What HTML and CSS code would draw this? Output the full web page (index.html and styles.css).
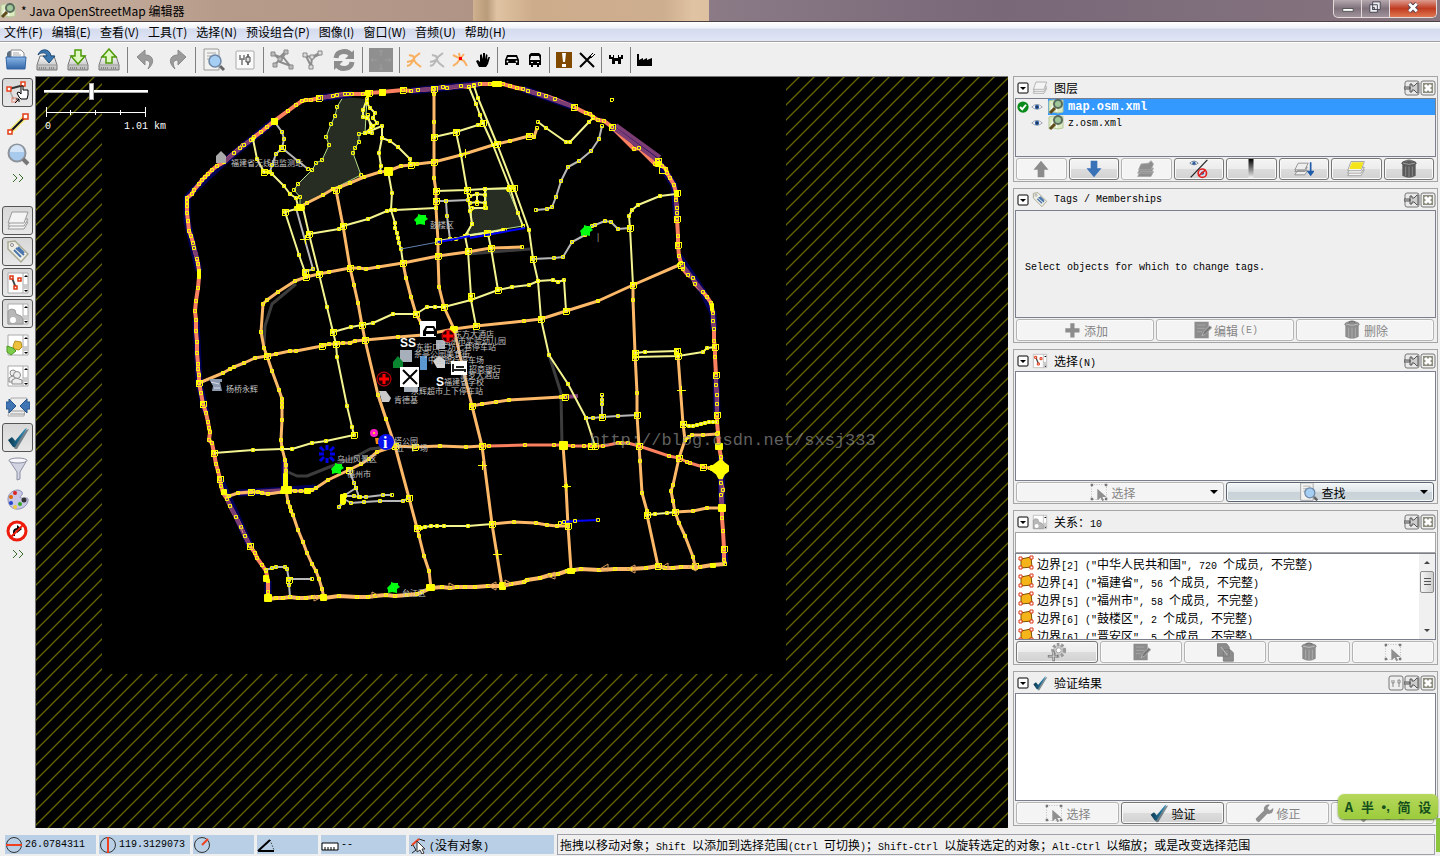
FILE: index.html
```html
<!DOCTYPE html>
<html lang="zh-CN">
<head>
    <meta charset="UTF-8">
    <meta name="viewport" content="width=device-width, initial-scale=1.0">
    <title>* Java OpenStreetMap 编辑器</title>
    <link rel="stylesheet" href="styles.css">
</head>
<body>
    <!-- shared icons -->
    <svg class="sprite" aria-hidden="true">
        <defs>
            <linearGradient id="blue" x2="0" y2="1"><stop offset="0" stop-color="#8ab8e8"/><stop offset="1" stop-color="#3467a8"/></linearGradient>
            <linearGradient id="metal" x2="0" y2="1"><stop offset="0" stop-color="#fafafa"/><stop offset="1" stop-color="#b4b4b4"/></linearGradient>
            <linearGradient id="tick" x2="1" y2="0"><stop offset="0" stop-color="#0c3850"/><stop offset="1" stop-color="#2b91c0"/></linearGradient>
            <linearGradient id="fade" x2="0" y2="1"><stop offset="0" stop-color="#000"/><stop offset="1" stop-color="#fff"/></linearGradient>
        </defs>
        <symbol id="i-josm" viewBox="0 0 16 16"><path d="M1 2l4-1 5 1 5-1v12l-5 1-5-1-4 1z" fill="#dcebc0" stroke="#b5c99a"/><path d="M3 10l4-6 2 9" fill="none" stroke="#fff"/><circle cx="10" cy="5" r="4" fill="#9fc79a" stroke="#5a6a5c" stroke-width="2"/><path d="M7 9l-5 5" stroke="#5f4a20" stroke-width="3"/></symbol>
        <symbol id="i-open" viewBox="0 0 24 24"><path d="M3 20V5l2-2h6l2 3h7v14z" fill="#5d6e80"/><path d="M7 2h10l3 3v10H7z" fill="#fff" stroke="#888"/><path d="M9 5h6M9 7h8" stroke="#aaa"/><path d="M2 9h20l-1 12H3z" fill="url(#blue)" stroke="#3465a4"/></symbol>
        <symbol id="i-disk" viewBox="0 0 24 24"><path d="M5 8h14l3 9v5H2v-5z" fill="url(#metal)" stroke="#777"/><path d="M2 17h20" stroke="#999"/><path d="M4 20h7M14 20h6" stroke="#555" stroke-dasharray="1 1"/></symbol>
        <symbol id="i-save" viewBox="0 0 24 24"><use href="#i-disk"/><path d="M3 7C5 0 15 0 16 8h4l-6 7-6-7h4C11 4 6 4 3 7z" fill="#3c78b0" stroke="#1d4b78"/></symbol>
        <symbol id="i-down" viewBox="0 0 24 24"><use href="#i-disk"/><path d="M9 2h6v6h4l-7 8-7-8h4z" fill="#e0f8c4" stroke="#4e9a06" stroke-width="1.5"/></symbol>
        <symbol id="i-up" viewBox="0 0 24 24"><use href="#i-disk"/><path d="M9 15V9H5l7-8 7 8h-4v6z" fill="#e0f8c4" stroke="#4e9a06" stroke-width="1.5"/></symbol>
        <symbol id="i-undo" viewBox="0 0 24 24"><path d="M3 9l8-7v5c9 0 10 8 3 14 3-6 2-9-3-9v5z" fill="#9b9b9b" stroke="#8a8a8a"/></symbol>
        <symbol id="i-find" viewBox="0 0 24 24"><path d="M2 1h14l1 1v20H2z" fill="#f2f2f0" stroke="#999"/><path d="M5 5h9M5 8h4M5 11h3" stroke="#aaa"/><circle cx="13" cy="13" r="6" fill="#a6cdf2" stroke="#6d86a5" stroke-width="1.5"/><path d="M18 18l4 4" stroke="#666" stroke-width="3"/></symbol>
        <symbol id="i-prefs" viewBox="0 0 24 24"><rect x="3" y="3" width="18" height="18" rx="1" fill="#fafafa" stroke="#aaa"/><path d="M7 7v5M11 7v5M7 11h4M9 11v6" fill="none" stroke="#777" stroke-width="1.500"/><path d="M15 6v4M15 14v3" stroke="#777" stroke-width="2"/><path d="M13 9h4v5h-4z" fill="#ddd" stroke="#444"/></symbol>
        <symbol id="i-ways" viewBox="0 0 24 24"><g fill="none" stroke="#8d8d8d" stroke-width="2"><path d="M2 6l8 3 6-6M16 4l-6 10 11 4M4 17l9-8 8 10M5 7l3 3"/></g><g fill="#bbb" stroke="#888"><path d="M1 4h4v4H1zM14 2h4v4h-4zM3 15h4v4H3zM19 17h4v4h-4zM8 9h4v4H8z"/></g></symbol>
        <symbol id="i-merge" viewBox="0 0 24 24"><path d="M4 8l7 1 7-4M5 8l5 10 1-8 8-4" fill="none" stroke="#8d8d8d" stroke-width="2"/><g fill="#ddd" stroke="#888"><path d="M2 5h4v4H2zM9 7h4v4H9zM17 3h4v4h-4zM8 17h4v4H8z"/></g></symbol>
        <symbol id="i-sync" viewBox="0 0 24 24"><path d="M4 10c1-8 12-8 15-3M20 14c-1 8-12 8-15 3" fill="none" stroke="#8c8c8c" stroke-width="5"/><path d="M22 2v9h-9zM2 22v-9h9z" fill="#8c8c8c"/></symbol>
        <symbol id="i-pan" viewBox="0 0 24 24"><path fill="#8f8f8f" d="M0 0h24v24H0z"/><path d="M12 2v6M12 16v6M2 12h6M16 12h6M10 4l2-2 2 2M10 20l2 2 2-2M4 10l-2 2 2 2M20 10l2 2-2 2" fill="none" stroke="#9c9c9c"/></symbol>
        <symbol id="i-road" viewBox="0 0 16 16"><path d="M3 3l4 1 1 3-3 2-4 1M14 1L9 5 7 9 4 13l-3 1M8 8l2 3 5 4" fill="none" stroke="currentColor" stroke-width="2"/></symbol>
        <symbol id="i-hand" viewBox="0 0 16 16"><path d="M4 15L1 9l2-1 2 2V3l1.500-1L8 7V1h2v6l1-5 1.500 1-.5 5 1.500-3L15 5l-2 7-2 3z"/></symbol>
        <symbol id="i-car" viewBox="0 0 16 16"><path d="M3 3h10l2 5v5h-3v-2H4v2H1V8z"/><path d="M4 5h8l1 2H3z" fill="#efefef"/><circle cx="3.500" cy="9.500" r="1" fill="#efefef"/><circle cx="12.500" cy="9.500" r="1" fill="#efefef"/></symbol>
        <symbol id="i-bus" viewBox="0 0 16 16"><path d="M4 1h8l2 2v10h-2v2h-2v-2H6v2H4v-2H2V3z"/><path d="M4 4h8l1 4H3zM4 10h2v1H4zM10 10h2v1h-2z" fill="#efefef"/></symbol>
        <symbol id="i-warn" viewBox="0 0 16 16"><path fill="#814a00" d="M0 0h16v16H0z"/><path d="M6 1h4l-1 9H7zM6 12h4v3H6z" fill="#fff"/></symbol>
        <symbol id="i-food" viewBox="0 0 16 16"><path d="M1 1l14 14M1 15L12 4" stroke="currentColor" stroke-width="2"/><path d="M10 5l4-4M12 6l4-4M10 4l2 2" stroke="currentColor"/></symbol>
        <symbol id="i-castle" viewBox="0 0 16 16"><path d="M1 3h2v2h2V3h1v3h4V3h1v2h2V3h2v4h-2v5h-3V9H7v3H4V7H1z"/></symbol>
        <symbol id="i-factory" viewBox="0 0 16 16"><path d="M0 14V2h2v6l4-2v2l4-2v2l5-2v8z"/></symbol>
        <symbol id="i-select" viewBox="0 0 24 24"><path d="M3 8l15-4" stroke="#333" stroke-width="2"/><path d="M3 8l5 11" stroke="#aaa" stroke-width="1.500"/><g fill="#fff" stroke="#e8431c" stroke-width="1.500"><path d="M1 6h4v4H1zM15 1h4v4h-4z"/><path opacity=".4" d="M6 17h4v4H6z"/></g><path d="M13 16l-2-4 2-1 2 2V5h2v4h5v5l-1 4h-6z" fill="#fff" stroke="#000"/><path d="M9 22l4-4M13 18h-3M13 18v3" stroke="#000"/></symbol>
        <symbol id="i-draw" viewBox="0 0 24 24"><path d="M4 20L19 5" stroke="#f5ec7a" stroke-width="5"/><path d="M4 20L19 5" stroke="#112" stroke-width="2"/><g fill="#fff" stroke="#e23c14" stroke-width="1.500"><path d="M2 18h4v4H2zM17 2h5v5h-5z"/></g></symbol>
        <symbol id="i-zoom" viewBox="0 0 24 24"><circle cx="11" cy="10" r="8.500" fill="#a8cbed" stroke="#8e949c" stroke-width="2"/><path d="M4 9a7 7 0 0114 0z" fill="#d3e5f6"/><path d="M17 16l5 5" stroke="#777" stroke-width="4"/></symbol>
        <symbol id="i-layers" viewBox="0 0 24 24"><g fill="#f4f4f4" stroke="#999"><path d="M6 13h16l-4 7H2z"/><path d="M6 10h16l-4 7H2z"/><path d="M6 3h16l-4 11H2z"/></g></symbol>
        <symbol id="i-tag" viewBox="0 0 24 24"><path d="M2 2l7-1 13 13-7 8L2 9z" fill="#f0efe6" stroke="#a9aa94" stroke-width="1.500"/><circle cx="6" cy="5" r="1.500" fill="#fff" stroke="#888"/><path d="M8 10l7 7M10 8l8 7M12 7l6 6" stroke="#4a76ae" stroke-width="2"/></symbol>
        <symbol id="i-panel" viewBox="0 0 24 24"><path d="M2 2h20v20H2z" fill="#fff" stroke="#aaa"/><path d="M17 2v20M17 14h5" stroke="#aaa"/><path d="M17 14h5v4h-5z" fill="#ccc"/><path d="M18 6l2-2 2 2zM18 19l2 2 2-2z"/></symbol>
        <symbol id="i-sel" viewBox="0 0 24 24"><use href="#i-panel"/><path d="M6 7l4 10" stroke="#444" stroke-width="2"/><g fill="#fff" stroke="#df3713" stroke-width="1.500"><path d="M4 5h3v3H4zM12 7h3v3h-3zM8 15h3v3H8z"/></g></symbol>
        <symbol id="i-rel" viewBox="0 0 24 24"><use href="#i-panel"/><path d="M2 9l3-2 4 1 1 4 5 2 2 3v5H2z" fill="#b8b8b8" stroke="#999"/><circle cx="7" cy="18" r="3" fill="#fff"/></symbol>
        <symbol id="i-cmd" viewBox="0 0 24 24"><use href="#i-panel"/><path d="M7 13l2-5 6 1 1 5-3 3-5-1z" fill="#ecc13d" stroke="#b99018"/><path d="M1 13l6 2 3 3-5 4-4-3z" fill="#7dcc4c" stroke="#4c9a24"/></symbol>
        <symbol id="i-user" viewBox="0 0 24 24"><use href="#i-panel"/><g fill="#eee" stroke="#888"><circle cx="7" cy="9" r="3"/><path d="M3 18v-4l3-2 5 2v4z"/><circle cx="11" cy="11" r="3.500"/><path d="M6 20v-4l4-2 6 2v4z"/></g></symbol>
        <symbol id="i-conf" viewBox="0 0 24 24"><path d="M5 3h16l-3 18H2z" fill="#eee" stroke="#aaa"/><path d="M3 16h17M4 19h15" stroke="#999"/><path d="M0 7h3V4l7 7-7 7v-4H0zM24 7h-3V4l-7 7 7 7v-4h3z" fill="#3f74b5" stroke="#275488"/></symbol>
        <symbol id="i-check" viewBox="0 0 24 24"><path d="M2 14l4-3 3 4L19 3l3-1-12 20H8z" fill="#0b2433" transform="translate(1 1)" opacity=".5"/><path d="M2 14l4-3 3 4L19 3l2-1L9 21H7z" fill="url(#tick)"/></symbol>
        <symbol id="i-filter" viewBox="0 0 24 24"><path d="M3 3h18l-7 12v7l-3 1v-8z" fill="#d2d4e2" stroke="#8d90a3"/><ellipse cx="12" cy="3.500" rx="9" ry="2.500" fill="#f7f7fb" stroke="#8d90a3"/></symbol>
        <symbol id="i-paint" viewBox="0 0 24 24"><path d="M2 12C1 4 12-1 16 4c2 4-4 4-1 6 4 1 8-2 7 3-2 10-19 12-20-1z" fill="#c8c8e6" stroke="#8f90b2"/><g><circle cx="9" cy="5" r="2" fill="#d22"/><circle cx="5" cy="9" r="2" fill="#d60"/><circle cx="5" cy="15" r="2" fill="#24c"/><circle cx="9" cy="19" r="2" fill="#ec4"/><circle cx="14" cy="16" r="2" fill="#3a2"/><circle cx="18" cy="12" r="2.500" fill="#333"/></g></symbol>
        <symbol id="i-turn" viewBox="0 0 24 24"><circle cx="11" cy="12" r="9" fill="#fff" stroke="#ee1c0c" stroke-width="3"/><path d="M8 17v-4c0-2 2-3 4-3" fill="none" stroke="#000" stroke-width="2"/><path d="M11 6l5 4-5 4z"/><path d="M5 18L17 6" stroke="#ee1c0c" stroke-width="2"/></symbol>
        <symbol id="i-eye" viewBox="0 0 16 16"><path d="M1 8q7-7 14 0-7 6-14 0z" fill="#fff" stroke="#7c8898"/><circle cx="8" cy="8" r="3" fill="#2f5f9f"/><circle cx="8" cy="8" r="1" fill="#000"/></symbol>
        <symbol id="i-ok" viewBox="0 0 16 16"><circle cx="8" cy="8" r="7.500" fill="#0b8a1c"/><path d="M4 8l3 3 5-6" fill="none" stroke="#fff" stroke-width="2.500"/></symbol>
        <symbol id="i-arrow" viewBox="0 0 24 24"><path d="M8 2h8v9h5l-9 11-9-11h5z" fill="currentColor"/></symbol>
        <symbol id="i-dup" viewBox="0 0 24 24"><g fill="#8e8e8e" stroke="#a8a8a8"><path d="M5 15h16l-3 6H2zM5 11h16l-3 6H2z"/><path d="M6 6l9-1 3-3 3 4-3 7H3z"/></g></symbol>
        <symbol id="i-vis" viewBox="0 0 24 24"><path d="M2 22L22 1" stroke="#222" stroke-width="1.500"/><path d="M1 5q5-5 10 0-5 4-10 0z" fill="#fff" stroke="#678"/><circle cx="6" cy="5" r="2" fill="#2f5f9f"/><circle cx="16" cy="17" r="5" fill="#d8dce8" stroke="#e02020" stroke-width="2"/><circle cx="16" cy="17" r="2" fill="#2f5f9f"/><path d="M12 20l8-7" stroke="#e02020" stroke-width="2"/></symbol>
        <symbol id="i-opac" viewBox="0 0 24 24"><path d="M9 0h6v24H9z" fill="url(#fade)"/></symbol>
        <symbol id="i-mergedn" viewBox="0 0 24 24"><g fill="#eee" stroke="#888"><path d="M4 14h12l-3 5H1zM4 10h12l-3 5H1z"/><path d="M5 5h12l-4 8H1z"/></g><path d="M20 4v12M17 15l3 4 3-4z" stroke="#1f5ba8" stroke-width="2" fill="#1f5ba8"/></symbol>
        <symbol id="i-active" viewBox="0 0 24 24"><use href="#i-layers"/><path d="M7 4h14l-3 8H4z" fill="#f4e41c"/></symbol>
        <symbol id="i-trash" viewBox="0 0 24 24"><path d="M4 6h16v14q-8 5-16 0z" fill="currentColor"/><path d="M8 9v12M12 9v13M16 9v12" stroke="#fff" stroke-opacity=".35"/><ellipse cx="12" cy="5" rx="9" ry="3.500" fill="currentColor"/><path d="M5 5q7 3 14 0" fill="none" stroke="#fff" stroke-opacity=".5"/><path d="M8 3q4-3 8 0" fill="none" stroke="#777" stroke-width="2"/></symbol>
        <symbol id="i-pin" viewBox="0 0 16 16"><rect x="1" y="1" width="14" height="14" rx="2" fill="#e9e9e9" stroke="#777"/><path d="M0 7h6v2H0zM6 4h2v2h2l3-3h1v10h-1l-3-3H8v2H6z" fill="#ccc" stroke="#555"/></symbol>
        <symbol id="i-close" viewBox="0 0 16 16"><rect x="1" y="1" width="14" height="14" rx="2" fill="#eee" stroke="#777"/><path d="M3 3h10v10H3z" fill="#8d8d80"/><path d="M5 5l6 6M11 5l-6 6" stroke="#fff" stroke-width="3"/></symbol>
        <symbol id="i-gear" viewBox="0 0 16 16"><rect x="1" y="1" width="14" height="14" rx="2" fill="#eee" stroke="#777"/><path d="M4 5v3h2V5M5 8v4M10 5h2v3h-2zM11 8v4" fill="none" stroke="#888"/></symbol>
        <symbol id="i-fold" viewBox="0 0 12 12"><rect x="1" y="1" width="10" height="10" rx="1" fill="#fff" stroke="#000"/><path d="M3 5h6L6 8z"/></symbol>
        <symbol id="i-plus" viewBox="0 0 24 24"><path d="M10 4h5v6h6v5h-6v6h-5v-6H4v-5h6z" fill="#8c8c8c"/></symbol>
        <symbol id="i-edit" viewBox="0 0 24 24"><path d="M3 2h17v20H3z" fill="#8c8c8c"/><path d="M6 6h10M6 10h10M6 14h6" stroke="#aaa"/><path d="M12 19l2-5 7-7 3 2-8 8z" fill="#777" stroke="#bbb"/></symbol>
        <symbol id="i-pick" viewBox="0 0 24 24"><path d="M3 3h18v18H3z" fill="none" stroke="#aaa" stroke-dasharray="1 2"/><path d="M2 2h3v3H2zM19 2h3v3h-3zM2 19h3v3H2zM19 19h3v3h-3z" fill="#777"/><path d="M10 8v14l4-3 2 4 2-1-2-4h5z" fill="#8f8f8f"/></symbol>
        <symbol id="i-copy" viewBox="0 0 24 24"><path d="M3 2h11l3 4v11H3zM10 9h8l4 4v10H10z" fill="#8c8c8c" stroke="#777"/><path d="M7 6l8 10" stroke="#ccc"/></symbol>
        <symbol id="i-newrel" viewBox="0 0 24 24"><circle cx="14" cy="10" r="7" fill="#ccc" stroke="#999" stroke-width="4" stroke-dasharray="3 2"/><circle cx="14" cy="10" r="3" fill="#fff" stroke="#999"/><path d="M1 17h12M8 11v12" stroke="#777" stroke-width="3"/><path d="M2 17h10M8 12v10" stroke="#ddd"/></symbol>
        <symbol id="i-fix" viewBox="0 0 24 24"><path d="M2 19l10-10c-1-5 3-8 7-7l-3 4 3 3 4-3c1 5-3 8-7 7L6 23q-3 0-4-4z" fill="#909090"/></symbol>
        <symbol id="i-area" viewBox="0 0 16 16"><path d="M3 4l10-2 1 10-11 1z" fill="#f4b41a" stroke="#7c5200"/><g fill="#fff" stroke="#dd3414"><path d="M1 2h3v3H1zM12 1h3v3h-3zM1 11h3v3H1zM12 11h3v3h-3z"/></g></symbol>
    </svg>

    <header class="titlebar">
        <svg class="ic16"><use href="#i-josm"/></svg>
        <h1>* Java OpenStreetMap 编辑器</h1>
        <div class="ghost-tab"></div>
        <div class="win-buttons">
            <button aria-label="最小化"><svg viewBox="0 0 28 18"><rect x="9" y="9" width="11" height="3" fill="#fff" stroke="#555"/></svg></button>
            <button aria-label="还原"><svg viewBox="0 0 28 18"><path d="M11 2h8v8h-8zM8 5h8v8H8zM11 8h2v2h-2z" fill="#eee" stroke="#445"/></svg></button>
            <button class="win-close" aria-label="关闭"><svg viewBox="0 0 48 18"><path d="M20 4l8 8M28 4l-8 8" stroke="#545" stroke-width="5"/><path d="M20 4l8 8M28 4l-8 8" stroke="#fff" stroke-width="3"/></svg></button>
        </div>
    </header>

    <nav class="menubar">
        <button>文件(F)</button><button>编辑(E)</button><button>查看(V)</button><button>工具(T)</button><button>选择(N)</button><button>预设组合(P)</button><button>图像(I)</button><button>窗口(W)</button><button>音频(U)</button><button>帮助(H)</button>
    </nav>

    <div class="toolbar">
        <button aria-label="打开"><svg><use href="#i-open"/></svg></button>
        <button aria-label="保存"><svg><use href="#i-save"/></svg></button>
        <button aria-label="下载"><svg><use href="#i-down"/></svg></button>
        <button aria-label="上传"><svg><use href="#i-up"/></svg></button>
        <i></i>
        <button aria-label="撤销"><svg><use href="#i-undo"/></svg></button>
        <button aria-label="重做"><svg class="flip"><use href="#i-undo"/></svg></button>
        <i></i>
        <button aria-label="搜索"><svg><use href="#i-find"/></svg></button>
        <button aria-label="首选项"><svg><use href="#i-prefs"/></svg></button>
        <i></i>
        <button aria-label="分割路径"><svg><use href="#i-ways"/></svg></button>
        <button aria-label="合并路径"><svg><use href="#i-merge"/></svg></button>
        <button aria-label="更新数据"><svg><use href="#i-sync"/></svg></button>
        <i></i>
        <button aria-label="移动"><svg><use href="#i-pan"/></svg></button>
        <i></i>
        <button class="small orange" aria-label="道路"><svg><use href="#i-road"/></svg></button>
        <button class="small silver" aria-label="小路"><svg><use href="#i-road"/></svg></button>
        <button class="small orange" aria-label="路口"><svg viewBox="0 0 16 16"><path d="M1 14l4-3 3-4 4 2 3 5M8 7L5 5 1 3M8 7l-1-6M8 7l4-5" fill="none" stroke="currentColor" stroke-width="2"/><path d="M7 5h3v3H7z" fill="#f00"/></svg></button>
        <button class="small" aria-label="手"><svg><use href="#i-hand"/></svg></button>
        <i></i>
        <button class="small" aria-label="汽车"><svg><use href="#i-car"/></svg></button>
        <button class="small" aria-label="公交"><svg><use href="#i-bus"/></svg></button>
        <i></i>
        <button class="small" aria-label="警告"><svg><use href="#i-warn"/></svg></button>
        <button class="small" aria-label="餐饮"><svg><use href="#i-food"/></svg></button>
        <i></i>
        <button class="small" aria-label="城堡"><svg><use href="#i-castle"/></svg></button>
        <i></i>
        <button class="small" aria-label="工厂"><svg><use href="#i-factory"/></svg></button>
    </div>

    <main>
        <div class="tools">
            <button class="on" aria-label="选择"><svg><use href="#i-select"/></svg></button>
            <button aria-label="绘制"><svg><use href="#i-draw"/></svg></button>
            <button aria-label="缩放"><svg><use href="#i-zoom"/></svg></button>
            <button class="more" aria-label="更多工具"><svg viewBox="0 0 12 9"><path d="M1 0l4 4-4 4M7 0l4 4-4 4" fill="none" stroke="#3a6a2a"/></svg></button>
            <button class="on split" aria-label="图层"><svg><use href="#i-layers"/></svg></button>
            <button class="on" aria-label="标签"><svg><use href="#i-tag"/></svg></button>
            <button class="on" aria-label="选择列表"><svg><use href="#i-sel"/></svg></button>
            <button class="on" aria-label="关系"><svg><use href="#i-rel"/></svg></button>
            <button aria-label="命令栈"><svg><use href="#i-cmd"/></svg></button>
            <button aria-label="作者"><svg><use href="#i-user"/></svg></button>
            <button aria-label="冲突"><svg><use href="#i-conf"/></svg></button>
            <button class="on" aria-label="验证"><svg><use href="#i-check"/></svg></button>
            <button aria-label="过滤"><svg><use href="#i-filter"/></svg></button>
            <button aria-label="样式"><svg><use href="#i-paint"/></svg></button>
            <button aria-label="转弯限制"><svg><use href="#i-turn"/></svg></button>
            <button class="more" aria-label="更多面板"><svg viewBox="0 0 12 9"><path d="M1 0l4 4-4 4M7 0l4 4-4 4" fill="none" stroke="#3a6a2a"/></svg></button>
        </div>

        <section class="map">
            <svg class="canvas" viewBox="36 77 972 751" preserveAspectRatio="xMinYMin slice">
                <defs>
                    <pattern id="hatch" width="15" height="15" patternUnits="userSpaceOnUse" patternTransform="translate(6 0)">
                        <path d="M-1 16L16 -1M-1 1L1 -1M14 16L16 14" stroke="#666600" stroke-width="1.300"/>
                    </pattern>
                    <marker id="n" markerWidth="5" markerHeight="5" refX="2" refY="2" markerUnits="userSpaceOnUse">
                        <path d="M.5 .5h3v3h-3z" fill="none" stroke="#ff0"/>
                    </marker>
                    <path id="ring-west" d="M469 87L461 86 447 88 443 87 433 89 418 90 411 91 403 90 382 92 369 93 363 94 352 94 348 94 345 94 337 95 333 96 319 98 311 100 306 100 302 101 296 105 288 111 274 121 267 127 261 132 254 137 251 140 244 145 240 148 234 153 224 162 217 166 212 170 208 174 205 177 202 180 199 184 194 190 192 194 187 198 187 202 187 206 187 213 188 221 189 231 191 236 193 243 194 248 197 259 198 264 199 271 199 277 198 288 196 301 195 311 196 320 196 331 197 342 197 353 198 364 198 369 199 375 199 383 201 393 203 404 206 413 208 422 209 428 210 432 209 440 212 443 214 453 216 464 218 471 220 479 221 486 223 493 227 499 230 506 236 517 241 527 245 536 250 546 255 553 257 558 262 565 266 571 268 581 268 592 268 599"/>
                    <path id="ring-east" d="M725 564L724 560 724 549 723 531 722 518 722 508 721 495 723 490 721 483 721 470 721 457 719 447 718 433 717 422 717 415 717 404 717 395 716 385 716 375 715 357 715 347 714 341 714 329 713 321 713 313 712 308 711 303 707 297 703 292 695 284 693 278 688 275 683 269 681 263 679 256 678 245 678 236 677 219 677 213 677 208 676 200 676 193 674 185 670 178 667 173 666 169 662 166 658 161 655 164 639 148 634 149 612 127 604 121 598 120 593 117 590 114 586 113 574 107 555 99 546 96 539 94 528 91 523 89 517 88 510 86 503 84 496 84 490 84 480 84 474 85 469 87"/>
                </defs>
                <path fill="#000" d="M36 77h972v751H36z"/>
                <path fill="url(#hatch)" d="M36 77h66v597h684V77h222v751H36z"/>

                <!-- parks -->
                <g class="park">
                    <path d="M343 97L337 107 335 116 331 124 326 137 329 145 322 160 316 163 312 170 298 184 294 190 300 197 300 206 333 189 361 175 353 153 355 148 359 142 359 134 365 133 367 99"/>
                    <path d="M486 189L508 189 523 226 467 235 472 224 471 209 486 208z"/>
                </g>
                <!-- tunnels -->
                <g class="tunnel">
                    <path d="M296 284L272 304 265 326 264 345M288 472L297 476 307 476 327 468 353 458 370 449 395 446M549 355L561 393 562 445M468 254L530 249M378 395L386 419M472 406L482 446"/>
                </g>
                <!-- ring road -->
                <g class="casing">
                    <path d="M319 98L352 94M411 91L480 84M523 89L574 107M612 127L658 161 674 185 677 219M679 256L703 292 713 313 714 330M716 375L717 415M721 457L722 508M724 549L725 564M274 121L224 162 194 190 187 198 187 221 199 271M196 320L199 383 206 413M220 479L250 546M268 581V599M238 493L286 490 316 488M285 460V490"/>
                </g>
                <use class="ring" href="#ring-west"/>
                <use class="ring" href="#ring-east"/>
                <g class="dusk">
                    <path d="M319 98L352 94M411 91L480 84M523 89L574 107M612 127L658 161M616 125L660 157M676 200L677 219M681 263L703 292M713 313L714 330M716 375L717 415M721 475L722 508M254 137L224 162M193 243L197 259M227 499L250 546M238 493L286 490M285 460V490M565 397L578 396"/>
                </g>
                <use class="ring-nodes" href="#ring-west"/>
                <use class="ring-nodes" href="#ring-east"/>
                <!-- primary roads -->
                <g class="primary">
                    <path d="M434 89V94L434 122 434 137 434 162 434 178 436 191 436 201 436 208 438 241 438 256 439 287 444 307 454 329 464 373 472 406 482 446 492 524 502 586"/>
                    <path d="M336 190L343 226 350 268 354 285 358 303 362 325 365 340 378 395 386 419 395 446 409 498 417 528 419 536 424 556 429 571 431 588"/>
                    <path d="M299 208L307 203 323 195 333 189 340 187 350 183 364 177 380 172 388 171 401 166 411 165 417 164 434 162 461 155 493 145 497 144 510 141 529 136 534 137 537 128"/>
                    <path d="M261 332L263 304 267 300 278 292 295 281 306 277 319 274 329 272 350 268 359 268 366 269 378 267 403 263 438 256 467 252 491 248 522 247"/>
                    <path d="M199 383L223 373 230 369 234 367 244 363 255 358 267 356 276 354 290 351 296 351 322 346 329 344 336 344 343 343 350 343 355 341 365 340 398 337 423 335 454 329 476 326 524 321 541 319 566 311 598 301 633 285 679 265"/>
                    <path d="M261 332L264 348 267 356 272 371 279 390 282 399 282 403 282 407 282 420 281 440 282 448 285 460 286 465 286 471 286 477 286 484 286 490 288 502 290 507 291 511 293 515 298 530 303 542 307 553 312 564 316 571 319 579 322 589 324 598"/>
                    <path d="M223 493L229 496 238 493 251 492 258 492 262 493 268 494 282 492 289 490 295 491 301 491 308 491 312 490 316 488 328 480 349 470 361 464 369 459 377 452 395 446 415 447 440 446 466 447 482 446"/>
                    <path d="M563 445L566 486 568 526 571 570"/>
                    <path d="M633 285L633 300 635 353 637 393 637 415 639 446 640 461 642 493 647 511 647 515 658 566"/>
                    <path d="M677 351L678 356 683 424 685 440 679 458 673 485 671 491 673 501 675 512 679 523 685 536 693 557 695 566"/>
                    <path d="M675 512L693 511 707 508 722 508"/>
                    <path d="M472 406L482 404 496 402 509 400 561 397 565 397"/>
                    <path d="M492 524L514 522 536 523 547 525 557 526 568 526"/>
                    <path d="M403 263L406 278 411 297 416 314 421 323 430 335"/>
                    <path d="M685 440L689 437 692 435 703 435 717 434"/>
                    <path class="wide" d="M268 599L276 598 283 598 290 597 298 598 306 598 313 597 320 597 324 598 339 596 357 597 368 597 375 596 386 595 395 596 407 595 417 594 422 592 431 588 442 587 450 588 457 587 465 587 475 587 488 586 502 586 511 584 524 582 527 580 540 578 550 575 558 574 567 571 574 570 581 569 599 570 615 569 630 569 646 568 658 566 665 568 673 568 681 567 692 567 700 567 712 565 725 564"/>
                </g>
                <g class="trunk">
                    <path d="M482 446L489 446 525 445 554 445 563 445 573 446 584 446 591 446 603 446 618 443 622 443 628 443 639 446 669 456 679 458 687 462 690 463 703 467 710 468 721 469"/>
                </g>
                <!-- secondary roads -->
                <g class="secondary">
                    <path d="M388 171L392 193 391 210 395 223 395 228 397 233 398 238 399 243 401 249 403 263"/>
                    <path d="M417 528L421 528 425 527 431 526 437 526 444 526 468 526 492 524"/>
                    <path d="M635 357L678 356 703 352 707 348 715 347M635 353L645 352 677 351M647 515L655 514 667 513 675 512M683 424L689 426 693 426 697 425 701 424 705 423 709 422 713 422 717 422"/>
                    <path d="M469 87L476 104 480 115 483 123 493 145 510 188 518 213 523 226"/>
                    <path d="M474 86L478 98 497 144 514 188 529 230 533 259 538 281 541 319 549 355 568 384 586 418 595 446"/>
                    <path d="M434 137L456 132 478 125 483 123M456 132L461 155 467 190 470 211 472 224 465 236 468 251 471 296 471 300 476 326"/>
                    <path d="M436 191L467 190 485 189 510 188M438 241L450 239 456 239 465 236 487 233 503 230 505 230M488 234L491 248 498 290"/>
                    <path d="M444 307L471 300 498 290 512 287 529 285 538 281 553 280 558 282 564 280 566 311"/>
                    <path d="M333 332L351 327 362 325 373 323 393 314 416 314 427 307 435 307 444 307"/>
                    <path d="M303 208L309 234 319 274 327 307 333 332 336 344 337 357 347 406 352 427 354 435 326 441 312 443 292 449 282 449 253 450 214 453"/>
                    <path d="M300 206L296 209 285 212 299 255 305 272 306 277M309 234L339 229 343 226 368 219 387 211 395 210 436 208"/>
                    <path d="M253 139L257 159 264 172 268 172 272 174 284 186 290 194 296 198 298 206"/>
                    <path d="M368 94L367 103 370 108 375 113 373 118 377 123 371 128 365 133 382 126 382 138 379 153 381 166 380 172M382 138L390 141 398 147 410 159 411 165M367 99L363 110 363 117 367 118 373 126 369 132 372 133 368 115"/>
                    <path d="M538 122L546 128 566 142 570 142 589 122 593 118M676 194L660 196 638 205 632 210 629 216 630 228 633 285"/>
                    <path d="M470 196L477 194 485 195M470 203L477 202 485 203M477 194V204M485 189V207M472 208H485"/>
                </g>
                <!-- minor roads -->
                <g class="minor">
                    <path d="M436 201L446 201 468 200M446 201L447 216 450 239M296 208L313 269 305 272M274 121L282 132 284 139 282 148 276 154 272 165 270 172M282 148L298 161 308 169"/>
                    <path d="M602 126L599 139 591 151 579 161 568 167 561 181 556 197 552 207 547 209 536 210M533 259L554 258 563 257 572 242 585 235 592 226 595 225 605 221 611 222 618 229 630 228"/>
                    <path d="M266 570L272 568 276 567 285 567 287 569 289 580 289 585 290 597M289 579L312 579M349 470L354 483 356 488 345 495 343 503 339 507 344 499 351 503 364 502 380 501 403 501 409 498M345 496L354 496 360 497 366 497 383 495 392 495M356 488L359 497"/>
                    <path d="M602 395V400L602 404 602 417M586 418L593 418 602 417 618 416 637 415"/>
                </g>
                <g class="water">
                    <path class="thin" d="M401 249L438 242"/>
                    <path d="M438 242L450 240 470 236M470 238L525 228"/>
                    <path class="nodes" d="M560 523L564 522 575 521 598 520"/>
                </g>
                <!-- junctions -->
                <g class="junction">
                    <path d="M431 86h6v6h-6zM431 134h6v6h-6zM431 159h6v6h-6zM433 188h6v6h-6zM433 198h6v6h-6zM435 238h6v6h-6zM435 253h6v6h-6zM347 265h6v6h-6zM340 223h6v6h-6zM333 187h6v6h-6zM306 231h6v6h-6zM282 209h6v6h-6zM303 274h6v6h-6zM316 271h6v6h-6zM302 269h6v6h-6zM330 329h6v6h-6zM362 337h6v6h-6zM359 322h6v6h-6zM413 311h6v6h-6zM441 304h6v6h-6zM400 260h6v6h-6zM408 162h6v6h-6zM271 118h6v6h-6zM316 95h6v6h-6zM379 89h6v6h-6zM400 87h6v6h-6zM366 90h6v6h-6zM279 145h6v6h-6zM261 169h6v6h-6zM453 129h6v6h-6zM464 187h6v6h-6zM494 141h6v6h-6zM511 185h6v6h-6zM507 185h6v6h-6zM480 120h6v6h-6zM526 133h6v6h-6zM571 104h6v6h-6zM609 124h6v6h-6zM655 158h6v6h-6zM659 167h6v6h-6zM674 190h6v6h-6zM674 216h6v6h-6zM675 242h6v6h-6zM678 262h6v6h-6zM630 282h6v6h-6zM627 225h6v6h-6zM563 308h6v6h-6zM538 316h6v6h-6zM530 256h6v6h-6zM495 287h6v6h-6zM488 245h6v6h-6zM465 248h6v6h-6zM468 293h6v6h-6zM473 323h6v6h-6zM484 230h6v6h-6z"/>
                    <path d="M264 353h6v6h-6zM319 343h6v6h-6zM333 341h6v6h-6zM196 380h6v6h-6zM200 401h6v6h-6zM211 450h6v6h-6zM217 476h6v6h-6zM247 543h6v6h-6zM248 489h6v6h-6zM346 467h6v6h-6zM351 432h6v6h-6zM406 495h6v6h-6zM414 525h6v6h-6zM392 443h6v6h-6zM412 444h6v6h-6zM469 403h6v6h-6zM479 443h6v6h-6zM489 521h6v6h-6zM565 523h6v6h-6zM562 394h6v6h-6zM599 414h6v6h-6zM634 412h6v6h-6zM632 350h6v6h-6zM632 354h6v6h-6zM674 348h6v6h-6zM675 353h6v6h-6zM712 344h6v6h-6zM713 372h6v6h-6zM714 412h6v6h-6zM680 421h6v6h-6zM676 455h6v6h-6zM644 512h6v6h-6zM672 509h6v6h-6zM700 464h6v6h-6zM636 443h6v6h-6zM588 443h6v6h-6zM592 443h6v6h-6zM655 563h6v6h-6zM692 563h6v6h-6zM721 546h6v6h-6zM286 577h6v6h-6zM610 98h3v3h-3z"/>
                    <path d="M300 239h9M305 235v9M461 153h9M465 149v9M478 465h9M482 461v9M493 554h9M497 550v9M562 486h9M566 482v9M677 390h9M681 386v9"/>
                </g>
                <g class="cluster">
                    <path d="M385 168h7v7h-7zM272 119h5v5h-5zM380 90h5v5h-5zM366 91h4v4h-4zM493 82h8v4h-8zM560 442h7v7h-7zM282 487h9v6h-9zM305 489h5v4h-5zM284 474h3v12h-3zM719 505h6v6h-6zM716 444h6v5h-6zM711 466h3v4h-3zM265 595h6v6h-6zM264 576h4v5h-4zM427 585h7v5h-7zM500 583h5v6h-5zM568 569h6v4h-6zM321 595h5v5h-5zM341 495h4v8h-4zM297 205h6v5h-6zM451 327h6v5h-6zM198 270h2v7h-2zM711 304h2v6h-2zM656 162h4v4h-4zM676 191h2v5h-2zM222 490h4v4h-4zM711 564h4v3h-4z"/>
                    <path d="M721 460l3 3 4 3v5l-4 3-2 4h-3l-2-4-4-3v-5l4-3z"/>
                </g>
                <g class="oneway">
                    <path d="M320 598l-6-3v6zM378 595l-6-3v6zM455 586l-6-3v6zM488 586l8-4v8zM511 583l-6-3v6zM547 576l8-4v7zM600 569l8-5v7zM627 569l8-4v8zM662 567l6-4v6zM688 567l8-4v8zM208 420l-3-7M243 533l-3-8M239 148l3-5"/>
                </g>

                <!-- places -->
                <path class="town" d="M414 220l4-4v-2l3 1h5v2l2 2-3 2v4l-5-1-4 1v-3zM580 231l4-4v-2l3 1h4v2l2 2-3 2v4l-5-1-4 1v-3zM331 469l4-4v-2l3 1h4v2l2 2-3 2v4l-5-1-4 1v-3zM387 588l4-4v-2l3 1h4v2l2 2-3 2v4l-5-1-4 1v-3z"/>
                <path d="M216 163v-7l5-5 5 5v7z" fill="#aaa"/>
                <path d="M209 379h13v3h-2l2 9h-10l1-5z" fill="#8d9ab0"/><path d="M211 382l8 2M214 388h6" stroke="#dde"/><path d="M379 391h7l5 7-2 4h-7z" fill="#c9c9c9"/>
                <path d="M320 447l4 4M327 445v5M334 447l-4 4M319 454h5M330 454h5M320 461l4-4M327 458v5M334 461l-4-4" stroke="#0000e8" stroke-width="3" fill="none"/>
                <circle cx="374" cy="433" r="4" fill="#ff1cc8"/><circle cx="374" cy="433" r="1" fill="#ff0"/>
                <path d="M375 438h6l-1 6h-4z" fill="#f58a12"/>
                <path d="M400 350h12v12h-12zM404 382h14v10h-14zM436 340h9v9h-9z" fill="#a6afba"/><path d="M420 356h7v14h-7z" fill="#5b96d0"/><path d="M393 362l5-6 5 6v6h-10z" fill="#0a8630"/><path d="M433 361l6-5 6 4v8h-8z" fill="#d6d6d6"/>
                <g class="label">
                    <text x="231" y="166">福建省无线电监测站</text><text x="430" y="228">鼓楼区</text><text x="226" y="392">杨桥永辉</text><text x="394" y="403">肯德基</text><text x="394" y="444">塔公园</text><text x="396" y="451">五一广场</text><text x="337" y="462">乌山风景区</text><text x="347" y="477">福州市</text><text x="402" y="596">台江区</text><text x="597" y="240">|</text>
                    <text x="454" y="337">东方大酒店</text><text x="442" y="344">福州市实验幼儿园</text><text x="416" y="350">东街口三坊七巷停车站</text><text x="414" y="357">茶亭公园美食街</text><text x="428" y="363">中国银行停车场</text><text x="469" y="372">招商银行</text><text x="460" y="378">聚罗大酒店</text><text x="444" y="385">福建省学校</text><text x="411" y="394">永辉超市上下停车站</text>
                </g>
                <circle cx="448" cy="336" r="6" class="med"/><path d="M448 331v10M443 336h10" class="cross"/>
                <circle cx="384" cy="379" r="7" class="med"/><path d="M384 374v10M379 379h10" class="cross"/>
                <text class="dollar" x="400" y="347">SS</text><text class="dollar" x="436" y="386">S</text>
                <path d="M420 321h16v16h-16zM400 367h19v20h-19zM451 361h16v14h-16z" fill="#fff"/>
                <path d="M423 336v-5l3-5h8l3 5v5h-3v-2h-8v2z"/><path d="M427 328h6l1 3h-8z" fill="#fff"/>
                <path d="M403 370l14 14M403 384l14-14" stroke="#000" stroke-width="2"/>
                <path d="M453 364v8M453 370h12v2M456 367h8" stroke="#222" stroke-width="2" fill="none"/>
                <circle cx="386" cy="442" r="8" fill="#0a12f0"/><text class="info" x="383" y="448">i</text>
                <text class="mark" x="590" y="445">http://blog.csdn.net/sxsj333</text>
            </svg>
            <div class="scale">
                <input type="range" min="0" max="100" value="45" aria-label="缩放">
                <svg viewBox="0 0 104 12"><path d="M2.500 1v10M101.500 1v10M2 6.500h100M26.500 4v5M51.500 4v5M76.500 4v5" stroke="#fff" fill="none"/></svg>
                <div class="scale-text"><span>0</span><span>1.01 km</span></div>
            </div>
        </section>

        <aside>
            <section class="panel">
                <h2><svg class="fold"><use href="#i-fold"/></svg><svg class="ic16"><use href="#i-layers"/></svg><span class="zh">图层</span>
                    <button aria-label="固定"><svg><use href="#i-pin"/></svg></button><button aria-label="关闭"><svg><use href="#i-close"/></svg></button></h2>
                <ul class="box layers">
                    <li class="current"><svg class="fold"><use href="#i-ok"/></svg><svg class="eye"><use href="#i-eye"/></svg><span><svg class="ic16"><use href="#i-josm"/></svg>map.osm.xml</span></li>
                    <li><svg class="fold"></svg><svg class="eye"><use href="#i-eye"/></svg><span><svg class="ic16"><use href="#i-josm"/></svg>z.osm.xml</span></li>
                </ul>
                <div class="actions">
                    <button disabled aria-label="上移"><svg class="upside"><use href="#i-arrow"/></svg></button>
                    <button class="bluebtn" aria-label="下移"><svg><use href="#i-arrow"/></svg></button>
                    <button disabled aria-label="复制"><svg><use href="#i-dup"/></svg></button>
                    <button aria-label="显示"><svg><use href="#i-vis"/></svg></button>
                    <button aria-label="不透明度"><svg><use href="#i-opac"/></svg></button>
                    <button aria-label="合并"><svg><use href="#i-mergedn"/></svg></button>
                    <button aria-label="激活"><svg><use href="#i-active"/></svg></button>
                    <button aria-label="删除图层"><svg><use href="#i-trash"/></svg></button>
                </div>
            </section>

            <section class="panel">
                <h2><svg class="fold"><use href="#i-fold"/></svg><svg class="ic16"><use href="#i-tag"/></svg><span>Tags / Memberships</span>
                    <button aria-label="固定"><svg><use href="#i-pin"/></svg></button><button aria-label="关闭"><svg><use href="#i-close"/></svg></button></h2>
                <div class="box hint">Select objects for which to change tags.</div>
                <div class="actions">
                    <button disabled><svg><use href="#i-plus"/></svg><span class="zh">添加</span></button>
                    <button disabled><svg><use href="#i-edit"/></svg><span class="zh">编辑</span>(E)</button>
                    <button disabled><svg><use href="#i-trash"/></svg><span class="zh">删除</span></button>
                </div>
            </section>

            <section class="panel">
                <h2><svg class="fold"><use href="#i-fold"/></svg><svg class="ic16"><use href="#i-sel"/></svg><span><span class="zh">选择</span>(N)</span>
                    <button aria-label="固定"><svg><use href="#i-pin"/></svg></button><button aria-label="关闭"><svg><use href="#i-close"/></svg></button></h2>
                <div class="box white"></div>
                <div class="actions drops">
                    <button disabled><svg><use href="#i-pick"/></svg><span class="zh">选择</span><b></b></button>
                    <button class="steel"><svg><use href="#i-find"/></svg><span class="zh">查找</span><b></b></button>
                </div>
            </section>

            <section class="panel">
                <h2><svg class="fold"><use href="#i-fold"/></svg><svg class="ic16"><use href="#i-rel"/></svg><span><span class="zh">关系：</span>10</span>
                    <button aria-label="固定"><svg><use href="#i-pin"/></svg></button><button aria-label="关闭"><svg><use href="#i-close"/></svg></button></h2>
                <input class="search" type="text" aria-label="过滤关系">
                <div class="box white relations">
                    <ul>
                        <li><svg class="ic16"><use href="#i-area"/></svg><p><span class="zh">边界</span>[2] ("<span class="zh">中华人民共和国</span>", 720 <span class="zh">个成员</span>, <span class="zh">不完整</span>)</p></li>
                        <li><svg class="ic16"><use href="#i-area"/></svg><p><span class="zh">边界</span>[4] ("<span class="zh">福建省</span>", 56 <span class="zh">个成员</span>, <span class="zh">不完整</span>)</p></li>
                        <li><svg class="ic16"><use href="#i-area"/></svg><p><span class="zh">边界</span>[5] ("<span class="zh">福州市</span>", 58 <span class="zh">个成员</span>, <span class="zh">不完整</span>)</p></li>
                        <li><svg class="ic16"><use href="#i-area"/></svg><p><span class="zh">边界</span>[6] ("<span class="zh">鼓楼区</span>", 2 <span class="zh">个成员</span>, <span class="zh">不完整</span>)</p></li>
                        <li><svg class="ic16"><use href="#i-area"/></svg><p><span class="zh">边界</span>[6] ("<span class="zh">晋安区</span>", 5 <span class="zh">个成员</span>, <span class="zh">不完整</span>)</p></li>
                    </ul>
                    <div class="scrollbar"><i class="arrow-up"></i><i class="thumb"></i><i class="arrow-down"></i></div>
                </div>
                <div class="actions">
                    <button aria-label="新建关系"><svg><use href="#i-newrel"/></svg></button>
                    <button disabled aria-label="编辑关系"><svg><use href="#i-edit"/></svg></button>
                    <button disabled aria-label="复制关系"><svg><use href="#i-copy"/></svg></button>
                    <button disabled aria-label="删除关系"><svg><use href="#i-trash"/></svg></button>
                    <button disabled aria-label="选择关系"><svg><use href="#i-pick"/></svg></button>
                </div>
            </section>

            <section class="panel">
                <h2><svg class="fold"><use href="#i-fold"/></svg><svg class="ic16"><use href="#i-check"/></svg><span class="zh">验证结果</span>
                    <button aria-label="设置"><svg><use href="#i-gear"/></svg></button><button aria-label="固定"><svg><use href="#i-pin"/></svg></button><button aria-label="关闭"><svg><use href="#i-close"/></svg></button></h2>
                <div class="box white"></div>
                <div class="actions">
                    <button disabled><svg><use href="#i-pick"/></svg><span class="zh">选择</span></button>
                    <button><svg><use href="#i-check"/></svg><span class="zh">验证</span></button>
                    <button disabled><svg><use href="#i-fix"/></svg><span class="zh">修正</span></button>
                    <button disabled><svg><use href="#i-fix"/></svg><span class="zh">忽略</span></button>
                </div>
            </section>
        </aside>
    </main>

    <footer>
        <div class="cell coord"><svg viewBox="0 0 18 18"><circle cx="9" cy="9" r="7.500" fill="none" stroke="#333"/><path d="M1 9h16" stroke="#f04020" stroke-width="2"/></svg>26.0784311</div>
        <div class="cell coord"><svg viewBox="0 0 18 18"><circle cx="9" cy="9" r="7.500" fill="none" stroke="#333"/><path d="M9 1v16" stroke="#f04020" stroke-width="2"/></svg>119.3129073</div>
        <div class="cell short"><svg viewBox="0 0 18 18"><circle cx="9" cy="9" r="7.500" fill="none" stroke="#333"/><path d="M9 9l6-6" stroke="#f04020" stroke-width="2"/></svg></div>
        <div class="cell short"><svg viewBox="0 0 18 18"><path d="M1 15h16M1 15L13 4" stroke="#000" stroke-width="2"/><path d="M13 4l4 10" stroke="#000" stroke-dasharray="1 2"/></svg></div>
        <div class="cell dist"><svg viewBox="0 0 18 18"><path d="M1 7h16v7H1zM4 14v-3M7 14v-3M10 14v-3M13 14v-3" fill="#fff" stroke="#000"/></svg>--</div>
        <div class="cell object"><svg viewBox="0 0 18 18"><path d="M2 10l8-7M4 9l3 5-4 3M10 3l6 2" fill="none" stroke="#222"/><path d="M3 9l7-6" stroke="#f04020" stroke-width="2"/><path d="M8 5v11l3-2 2 4 2-1-2-4h3z" fill="#fff" stroke="#333"/></svg><span>(<span class="zh">没有对象</span>)</span></div>
        <div class="help"><span class="zh">拖拽以移动对象；</span>Shift <span class="zh">以添加到选择范围</span>(Ctrl <span class="zh">可切换</span>)<span class="zh">；</span>Shift-Ctrl <span class="zh">以旋转选定的对象；</span>Alt-Ctrl <span class="zh">以缩放；或是改变选择范围</span></div>
    </footer>

    <div class="ime"><span>A</span><span>半</span><span class="dots">•,</span><span>简</span><span>设</span></div>
    <div class="ime-edge"></div>
</body>
</html>
```

FILE: styles.css
```css
* {
    box-sizing: border-box;
}

body {
    margin: 0;
    height: 100vh;
    display: flex;
    flex-direction: column;
    overflow: hidden;
    background: #efefef;
    color: #000;
    font: 10px "Liberation Mono", "Noto Sans CJK SC", monospace;
}

button {
    margin: 0;
    padding: 0;
    border: 0;
    background: none;
    color: inherit;
    font: inherit;
}

svg {
    display: block;
    flex: none;
}

ul,
p {
    margin: 0;
    padding: 0;
    list-style: none;
}

.sprite {
    position: absolute;
    width: 0;
    height: 0;
}

.ic16 {
    width: 16px;
    height: 16px;
}

.zh {
    font-family: "Noto Sans CJK SC", sans-serif;
    font-size: 12px;
}

/* title bar */
.titlebar {
    height: 22px;
    flex: none;
    display: flex;
    align-items: center;
    gap: 5px;
    border-bottom: 1px solid #4b4044;
    background: linear-gradient(90deg, #cbb8a8 0, #b79b8a 220px, #b09486 470px, #8a7a86 720px, #786878 1000px, #87757f 100%);
}

.titlebar h1 {
    margin: 0;
    font: 12px "Noto Sans CJK SC", sans-serif;
}

.ghost-tab {
    width: 236px;
    height: 100%;
    margin-left: 284px;
    background: linear-gradient(90deg, #cfb08f, #b99c7a 14px, #e0c3a2 24px, #ccac8b 60px, #cdae8e 190px, #e0c3a2 220px, #dcc0a0);
}

.win-buttons {
    align-self: flex-start;
    display: flex;
    height: 18px;
    margin: 0 3px 0 auto;
    border: 1px solid #e4dada;
    border-top: 0;
    border-radius: 0 0 5px 5px;
    overflow: hidden;
    background: linear-gradient(#b5a8ae, #80717b 50%, #a0939b);
}

.win-buttons button {
    width: 28px;
    border-right: 1px solid #e4dada;
}

.win-buttons .win-close {
    width: 46px;
    border: 0;
    background: linear-gradient(#dd9c90, #c03b20 50%, #e07850);
}

.win-buttons svg {
    width: 100%;
    height: 17px;
}

/* menu and toolbar */
.menubar {
    height: 20px;
    flex: none;
    display: flex;
    align-items: center;
    gap: 9px;
    padding: 0 4px;
    border-bottom: 1px solid #a0a0a0;
    background: linear-gradient(#fff, #f0f3fa 6px, #d4dbed 7px, #e0e6f6);
    font: 12px "Noto Sans CJK SC", sans-serif;
    white-space: nowrap;
}

.toolbar {
    height: 34px;
    flex: none;
    display: flex;
    align-items: center;
    border-top: 1px solid #fff;
}

.toolbar button {
    width: 31px;
    height: 26px;
    display: grid;
    place-items: center;
}

.toolbar svg {
    width: 24px;
    height: 24px;
}

.toolbar .small {
    width: 23px;
}

.toolbar .small svg {
    width: 16px;
    height: 16px;
}

.toolbar i {
    width: 1px;
    height: 26px;
    margin: 0 2px 0 3px;
    background: #808080;
}

.orange {
    color: #f8b060;
}

.silver {
    color: #b8b8b8;
}

.flip {
    transform: scaleX(-1);
}

.upside {
    transform: rotate(180deg);
}

/* main area */
main {
    flex: 1;
    min-height: 0;
    display: flex;
}

.tools {
    width: 35px;
    flex: none;
    padding: 2px 2px 0;
}

.tools button {
    width: 31px;
    height: 29px;
    margin-bottom: 2px;
    display: grid;
    place-items: center;
}

.tools svg {
    width: 24px;
    height: 24px;
}

.tools .on {
    border: 1px solid #555;
    border-radius: 3px;
    background: linear-gradient(#d8d8d8, #e8e8e8);
}

.tools .more {
    height: 15px;
}

.tools .more svg {
    width: 12px;
    height: 9px;
}

.tools .split {
    margin-top: 20px;
}

.map {
    position: relative;
    flex: 1;
    min-width: 0;
    overflow: hidden;
    border-left: 1px solid #777;
    border-top: 1px solid #777;
    background: #000;
}

.canvas {
    width: 100%;
    height: 100%;
}

.canvas g > path {
    fill: none;
    stroke-linejoin: round;
}

.canvas .park path {
    fill: #272d22;
    stroke: #b5e08c;
    marker-mid: url(#n);
}

.canvas .tunnel path {
    stroke: #3c3c3c;
    stroke-width: 3;
}

.canvas .casing path {
    stroke: #000058;
    stroke-width: 7;
}

.ring {
    fill: none;
    stroke: #fa8060;
    stroke-width: 4;
}

.ring-nodes {
    fill: none;
    marker: url(#n);
}

.canvas .dusk path {
    stroke: #7c3c74;
    stroke-width: 4;
}

.canvas .primary path {
    stroke: #fdb868;
    stroke-width: 3;
    marker: url(#n);
}

.canvas .primary .wide {
    stroke-width: 4;
}

.canvas .trunk path {
    stroke: #fa8060;
    stroke-width: 3;
    marker: url(#n);
}

.canvas .secondary path {
    stroke: #f4f490;
    stroke-width: 2;
    marker: url(#n);
}

.canvas .minor path {
    stroke: #b8b8b8;
    stroke-width: 2;
    marker: url(#n);
}

.canvas .water path {
    stroke: #00f;
    stroke-width: 2;
}

.canvas .water .thin {
    stroke: #6080b0;
    stroke-width: 1;
}

.canvas .water .nodes {
    marker: url(#n);
}

.canvas .junction path {
    stroke: #ff0;
    shape-rendering: crispEdges;
}

.canvas .cluster path {
    fill: #ff0;
    stroke: #ff0;
    stroke-width: 2;
}

.canvas .oneway path {
    stroke: #e0a060;
}

.town {
    fill: #00ff10;
}

.label text {
    fill: #c4c4c4;
    font: 8px "Noto Sans CJK SC", sans-serif;
}

.med {
    fill: #200;
    stroke: #e00010;
}

.cross {
    stroke: #f00;
    stroke-width: 3;
}

.dollar {
    fill: #fff;
    font: bold 12px "Liberation Sans", sans-serif;
}

.info {
    fill: #fff;
    font: bold 16px "Liberation Serif", serif;
}

.mark {
    fill: #8c8c8c;
    fill-opacity: .7;
    font: 17px "Liberation Mono", monospace;
}

.scale {
    position: absolute;
    left: 8px;
    top: 5px;
    width: 124px;
    color: #fff;
}

.scale input {
    display: block;
    width: 104px;
    height: 18px;
    margin: 0;
    background: none;
    appearance: none;
}

.scale input::-webkit-slider-runnable-track {
    height: 3px;
    border-bottom: 1px solid #aaa;
    background: #fff;
}

.scale input::-webkit-slider-thumb {
    width: 5px;
    height: 17px;
    margin-top: -7px;
    border: 1px solid #aaa;
    background: #fff;
    appearance: none;
}

.scale svg {
    width: 104px;
    height: 12px;
    margin: 6px 0 3px;
}

.scale-text {
    display: flex;
    justify-content: space-between;
    padding: 0 2px 0 1px;
}

/* side panels */
aside {
    width: 427px;
    flex: none;
    display: grid;
    grid-template-rows: 106px repeat(4, 1fr);
    gap: 6px;
    margin-left: 5px;
    padding: 0 2px 2px 0;
}

.panel {
    min-height: 0;
    min-width: 0;
    display: flex;
    flex-direction: column;
    padding: 0 1px 1px;
    border: 1px solid #a5a5a5;
}

.panel h2 {
    height: 21px;
    flex: none;
    display: flex;
    align-items: center;
    margin: 0;
    padding: 0 0 0 2px;
    font: inherit;
}

.panel h2 > span {
    flex: 1;
    margin-left: 6px;
}

.panel h2 .ic16 {
    margin-left: 3px;
}

.panel h2 button svg {
    width: 16px;
    height: 16px;
}

.fold {
    width: 12px;
    height: 12px;
}

.box {
    flex: 1;
    min-height: 0;
    border: 1px solid #7c7f8c;
}

.white {
    background: #fff;
}

.hint {
    display: flex;
    align-items: center;
    padding: 6px 9px 0;
}

.layers li {
    height: 16px;
    display: flex;
    align-items: center;
    padding-left: 1px;
}

.layers .eye {
    width: 12px;
    height: 12px;
    margin: 0 5px 0 2px;
}

.layers span {
    flex: 1;
    display: flex;
    align-items: center;
    gap: 4px;
}

.layers .current span {
    background: #3399ff;
    color: #fff;
    font-size: 12px;
    font-weight: bold;
}

.actions {
    height: 23px;
    flex: none;
    display: flex;
    gap: 2px;
    padding: 1px 2px 0 1px;
}

.actions button {
    flex: 1 1 0;
    min-width: 0;
    display: flex;
    align-items: center;
    justify-content: center;
    gap: 2px;
    overflow: hidden;
    border: 1px solid #777;
    border-radius: 3px;
    box-shadow: inset 0 0 0 1px #fafafa;
    background: linear-gradient(#f4f4f4, #ececec 50%, #dcdcdc 51%, #d2d2d2);
    color: #5a5a5a;
}

.actions button .zh {
    color: #000;
}

.actions button:disabled {
    border-color: #b4b4b4;
    background: #f4f4f4;
    color: #8c8c8c;
}

.actions button:disabled .zh {
    color: #858585;
}

.actions svg {
    width: 20px;
    height: 20px;
}

.actions .bluebtn {
    color: #3a72b8;
}

.drops {
    height: 21px;
}

.drops svg {
    margin-left: auto;
}

.actions b {
    margin: 0 5px 0 auto;
    border: 4px solid transparent;
    border-top-color: #000;
    border-bottom: 0;
}

.actions .steel {
    border-color: #5b6672;
    background: linear-gradient(#f2f5f7, #dfe6ea 50%, #c8d2d8 51%, #cdd6da);
}

.search {
    height: 21px;
    flex: none;
    width: 100%;
    border: 1px solid #a5a5a5;
    background: #fff;
}

.relations {
    display: flex;
    overflow: hidden;
}

.relations ul {
    flex: 1;
    min-width: 0;
}

.relations li {
    height: 18px;
    display: flex;
    align-items: center;
    gap: 3px;
    padding-left: 2px;
    white-space: nowrap;
}

.scrollbar {
    width: 16px;
    display: flex;
    flex-direction: column;
    align-items: center;
    background: #f0f0f0;
}

.arrow-up,
.arrow-down {
    margin: 7px 0;
    border: 3px solid transparent;
    border-bottom-color: #444;
    border-top: 0;
}

.arrow-down {
    margin-top: auto;
    border-top: 3px solid #444;
    border-bottom: 0;
}

.thumb {
    width: 14px;
    height: 22px;
    border: 1px solid #8c8c8c;
    border-radius: 2px;
    background: repeating-linear-gradient(#555 0 1px, transparent 1px 3px) center / 7px 8px no-repeat, linear-gradient(90deg, #f5f5f5, #cfcfcf);
}

/* status bar */
footer {
    height: 28px;
    flex: none;
    display: flex;
    align-items: center;
    gap: 3px;
    padding: 6px 5px 1px;
    white-space: nowrap;
}

.cell {
    height: 19px;
    flex: none;
    display: flex;
    align-items: center;
    gap: 2px;
    background: #b8cfe5;
}

.cell svg {
    width: 18px;
    height: 18px;
}

.coord {
    width: 91px;
}

.short {
    width: 61px;
}

.dist {
    width: 85px;
}

.object {
    width: 145px;
}

.help {
    height: 21px;
    flex: 1;
    min-width: 0;
    overflow: hidden;
    padding: 0 2px;
    border: 1px solid #a0a0a8;
    line-height: 19px;
}

/* input method bar floats over the window */
.ime {
    position: absolute;
    right: 2px;
    bottom: 37px;
    width: 100px;
    height: 25px;
    display: flex;
    align-items: center;
    justify-content: space-around;
    padding: 0 3px;
    border-radius: 6px;
    background: linear-gradient(#b6d85c, #9ccb3c);
    box-shadow: 0 1px 2px #55702a;
    color: #14501c;
    font: bold 13px "Noto Sans CJK SC", sans-serif;
}

.dots {
    font-family: "Liberation Sans", sans-serif;
}

.ime-edge {
    position: absolute;
    right: 0;
    bottom: 4px;
    width: 4px;
    height: 34px;
    background: #8cc63c;
}
```
